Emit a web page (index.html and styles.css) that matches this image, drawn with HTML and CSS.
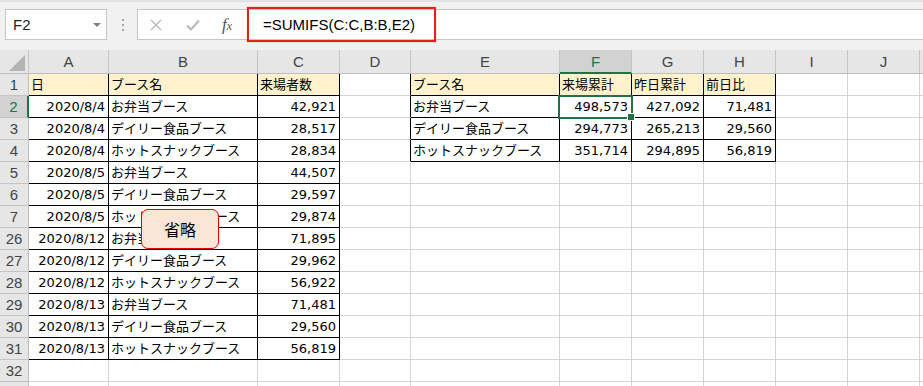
FILE: index.html
```html
<!DOCTYPE html>
<html lang="ja">
<head>
    <meta charset="UTF-8">
    <meta name="viewport" content="width=device-width, initial-scale=1.0">
    <title>来場累計 - SUMIFS</title>
    <link rel="stylesheet" href="styles.css">
</head>
<body>
    <div class="toolbar">
        <div class="namebox">
            <span>F2</span>
            <svg class="dropdown" width="8" height="4" viewBox="0 0 8 4"><polygon points="0,0 8,0 4,4" fill="#808080"/></svg>
        </div>
        <svg class="grip" width="4" height="12" viewBox="0 0 4 12">
            <rect x="1" y="0" width="2" height="2" fill="#a6a6a6"/>
            <rect x="1" y="5" width="2" height="2" fill="#a6a6a6"/>
            <rect x="1" y="10" width="2" height="2" fill="#a6a6a6"/>
        </svg>
        <div class="formulabar">
            <div class="bar-buttons">
                <svg class="btn-cancel" width="12" height="12" viewBox="0 0 12 12"><path d="M1 1 L11 11 M11 1 L1 11" stroke="#b9b9b9" stroke-width="1.4" fill="none"/></svg>
                <svg class="btn-enter" width="14" height="12" viewBox="0 0 14 12"><path d="M1 6.5 L5 10.5 L13 1.5" stroke="#b9b9b9" stroke-width="2" fill="none"/></svg>
                <span class="fx">f<span>x</span></span>
            </div>
            <div class="formula">=SUMIFS(C:C,B:B,E2)</div>
        </div>
    </div>

    <div class="sheet">
        <table class="grid">
            <colgroup>
                <col class="w-rh">
                <col class="w-a">
                <col class="w-b">
                <col class="w-c">
                <col class="w-d">
                <col class="w-e">
                <col class="w-n"><col class="w-n"><col class="w-n"><col class="w-n"><col class="w-n"><col class="w-n">
            </colgroup>
            <thead>
                <tr>
                    <th class="corner"><svg width="28" height="23" viewBox="0 0 28 23"><polygon points="25,5 25,21 9,21" fill="#b4b4b4"/></svg></th>
                    <th>A</th><th>B</th><th>C</th><th>D</th><th>E</th>
                    <th class="sel">F</th><th>G</th><th>H</th><th>I</th><th>J</th><th></th>
                </tr>
            </thead>
            <tbody>
                <tr>
                    <th>1</th>
                    <td class="bd hd">日</td><td class="bd hd">ブース名</td><td class="bd hd">来場者数</td><td class="edge"></td>
                    <td class="bd hd">ブース名</td><td class="bd hd">来場累計</td><td class="bd hd">昨日累計</td><td class="bd hd">前日比</td>
                    <td></td><td></td><td></td>
                </tr>
                <tr>
                    <th class="sel-row">2</th>
                    <td class="bd n">2020/8/4</td><td class="bd">お弁当ブース</td><td class="bd n">42,921</td><td class="edge"></td>
                    <td class="bd">お弁当ブース</td><td class="bd n active">498,573</td><td class="bd n">427,092</td><td class="bd n">71,481</td>
                    <td></td><td></td><td></td>
                </tr>
                <tr>
                    <th>3</th>
                    <td class="bd n">2020/8/4</td><td class="bd">デイリー食品ブース</td><td class="bd n">28,517</td><td class="edge"></td>
                    <td class="bd">デイリー食品ブース</td><td class="bd n">294,773</td><td class="bd n">265,213</td><td class="bd n">29,560</td>
                    <td></td><td></td><td></td>
                </tr>
                <tr>
                    <th>4</th>
                    <td class="bd n">2020/8/4</td><td class="bd">ホットスナックブース</td><td class="bd n">28,834</td><td class="edge"></td>
                    <td class="bd">ホットスナックブース</td><td class="bd n">351,714</td><td class="bd n">294,895</td><td class="bd n">56,819</td>
                    <td></td><td></td><td></td>
                </tr>
                <tr>
                    <th>5</th>
                    <td class="bd n">2020/8/5</td><td class="bd">お弁当ブース</td><td class="bd n">44,507</td>
                    <td></td><td></td><td></td><td></td><td></td><td></td><td></td><td></td>
                </tr>
                <tr>
                    <th>6</th>
                    <td class="bd n">2020/8/5</td><td class="bd">デイリー食品ブース</td><td class="bd n">29,597</td>
                    <td></td><td></td><td></td><td></td><td></td><td></td><td></td><td></td>
                </tr>
                <tr>
                    <th>7</th>
                    <td class="bd n">2020/8/5</td><td class="bd">ホットスナックブース</td><td class="bd n">29,874</td>
                    <td></td><td></td><td></td><td></td><td></td><td></td><td></td><td></td>
                </tr>
                <tr>
                    <th>26</th>
                    <td class="bd n">2020/8/12</td><td class="bd">お弁当ブース</td><td class="bd n">71,895</td>
                    <td></td><td></td><td></td><td></td><td></td><td></td><td></td><td></td>
                </tr>
                <tr>
                    <th>27</th>
                    <td class="bd n">2020/8/12</td><td class="bd">デイリー食品ブース</td><td class="bd n">29,962</td>
                    <td></td><td></td><td></td><td></td><td></td><td></td><td></td><td></td>
                </tr>
                <tr>
                    <th>28</th>
                    <td class="bd n">2020/8/12</td><td class="bd">ホットスナックブース</td><td class="bd n">56,922</td>
                    <td></td><td></td><td></td><td></td><td></td><td></td><td></td><td></td>
                </tr>
                <tr>
                    <th>29</th>
                    <td class="bd n">2020/8/13</td><td class="bd">お弁当ブース</td><td class="bd n">71,481</td>
                    <td></td><td></td><td></td><td></td><td></td><td></td><td></td><td></td>
                </tr>
                <tr>
                    <th>30</th>
                    <td class="bd n">2020/8/13</td><td class="bd">デイリー食品ブース</td><td class="bd n">29,560</td>
                    <td></td><td></td><td></td><td></td><td></td><td></td><td></td><td></td>
                </tr>
                <tr>
                    <th>31</th>
                    <td class="bd n">2020/8/13</td><td class="bd">ホットスナックブース</td><td class="bd n">56,819</td>
                    <td></td><td></td><td></td><td></td><td></td><td></td><td></td><td></td>
                </tr>
                <tr>
                    <th>32</th>
                    <td></td><td></td><td></td><td></td><td></td><td></td><td></td><td></td><td></td><td></td><td></td>
                </tr>
                <tr>
                    <th></th>
                    <td></td><td></td><td></td><td></td><td></td><td></td><td></td><td></td><td></td><td></td><td></td>
                </tr>
            </tbody>
        </table>
        <div class="callout">省略</div>
    </div>
</body>
</html>
```

FILE: styles.css
```css
* {
    box-sizing: border-box;
}
html, body {
    margin: 0;
    padding: 0;
}
body {
    width: 923px;
    height: 386px;
    overflow: hidden;
    background-color: #fff;
    font-family: "Liberation Sans", Arial, sans-serif;
    color: #000;
}

/* formula bar */
.toolbar {
    display: flex;
    align-items: flex-start;
    height: 50px;
    padding-top: 7px;
    background-color: #f1f1f1;
    border-top: 2px solid #e2e2e2;
}
.namebox {
    display: flex;
    align-items: center;
    justify-content: space-between;
    width: 102px;
    height: 31px;
    margin-left: 5px;
    padding: 0 5px 0 7px;
    background-color: #fff;
    border: 1px solid #c6c6c6;
    font-size: 15px;
    color: #222;
}
.grip {
    margin: 10px 12px 0 14px;
}
.formulabar {
    flex: 1;
    display: flex;
    height: 31px;
    margin-right: -4px;
    background-color: #fff;
    border: 1px solid #c6c6c6;
}
.bar-buttons {
    display: flex;
    align-items: center;
    width: 109px;
    padding-left: 12px;
}
.btn-enter {
    margin-left: 24px;
}
.fx {
    margin-left: 22px;
    font-family: "Liberation Serif", serif;
    font-style: italic;
    font-size: 17px;
    color: #555;
}
.fx span {
    font-size: 12px;
}
.formula {
    width: 189px;
    margin: -3px 0;
    padding-left: 14px;
    border: 2px solid #e8201a;
    box-shadow: 0 0 1px rgba(232, 32, 26, 0.6);
    font-size: 15px;
    line-height: 31px;
    white-space: nowrap;
}

/* sheet */
.sheet {
    position: relative;
}
.grid {
    table-layout: fixed;
    width: 992px;
    border-collapse: separate;
    border-spacing: 0;
}
.w-rh { width: 29px; }
.w-a { width: 80px; }
.w-b { width: 149px; }
.w-c { width: 82px; }
.w-d { width: 71px; }
.w-e { width: 149px; }
.w-n { width: 72px; }

th, td {
    height: 22px;
    padding: 0;
    white-space: nowrap;
    overflow: hidden;
}
th {
    background-color: #e6e6e6;
    border-right: 1px solid #c4c4c4;
    border-bottom: 1px solid #c4c4c4;
    font-weight: normal;
    font-size: 15px;
    color: #444;
    text-align: center;
}
thead th {
    height: 24px;
    border-bottom-color: #bdbdbd;
}
tbody th {
    border-right-color: #bdbdbd;
}
.corner svg {
    display: block;
}
th.sel {
    background-color: #d2d2d2;
    border-bottom: 2px solid #217346;
    color: #217346;
}
th.sel-row {
    background-color: #d2d2d2;
    border-right: 2px solid #217346;
    color: #217346;
}
td {
    padding: 1px 2px 0 2px;
    border-right: 1px solid #d4d4d4;
    border-bottom: 1px solid #d4d4d4;
    font-family: "DejaVu Sans", "Noto Sans CJK JP", sans-serif;
    font-size: 13px;
    line-height: 20px;
}
td.bd {
    border-right-color: #000;
    border-bottom-color: #000;
}
td.edge {
    border-right-color: #000;
}
td.hd {
    background-color: #fff2cc;
}
td.n {
    text-align: right;
    padding-right: 3px;
}
td.active {
    position: relative;
    overflow: visible;
}
td.active::before {
    content: "";
    position: absolute;
    top: -1px;
    left: -2px;
    right: -2px;
    bottom: -2px;
    border: 2px solid #217346;
}
td.active::after {
    content: "";
    position: absolute;
    right: -4px;
    bottom: -4px;
    width: 6px;
    height: 6px;
    background-color: #217346;
    border: 1px solid #fff;
}

.callout {
    position: absolute;
    left: 141px;
    top: 159px;
    width: 78px;
    height: 40px;
    display: flex;
    align-items: center;
    justify-content: center;
    background-color: #fbe5d6;
    border: 1px solid #e60000;
    border-radius: 7px;
    font-family: "Noto Sans CJK JP", sans-serif;
    font-size: 16px;
}
```
